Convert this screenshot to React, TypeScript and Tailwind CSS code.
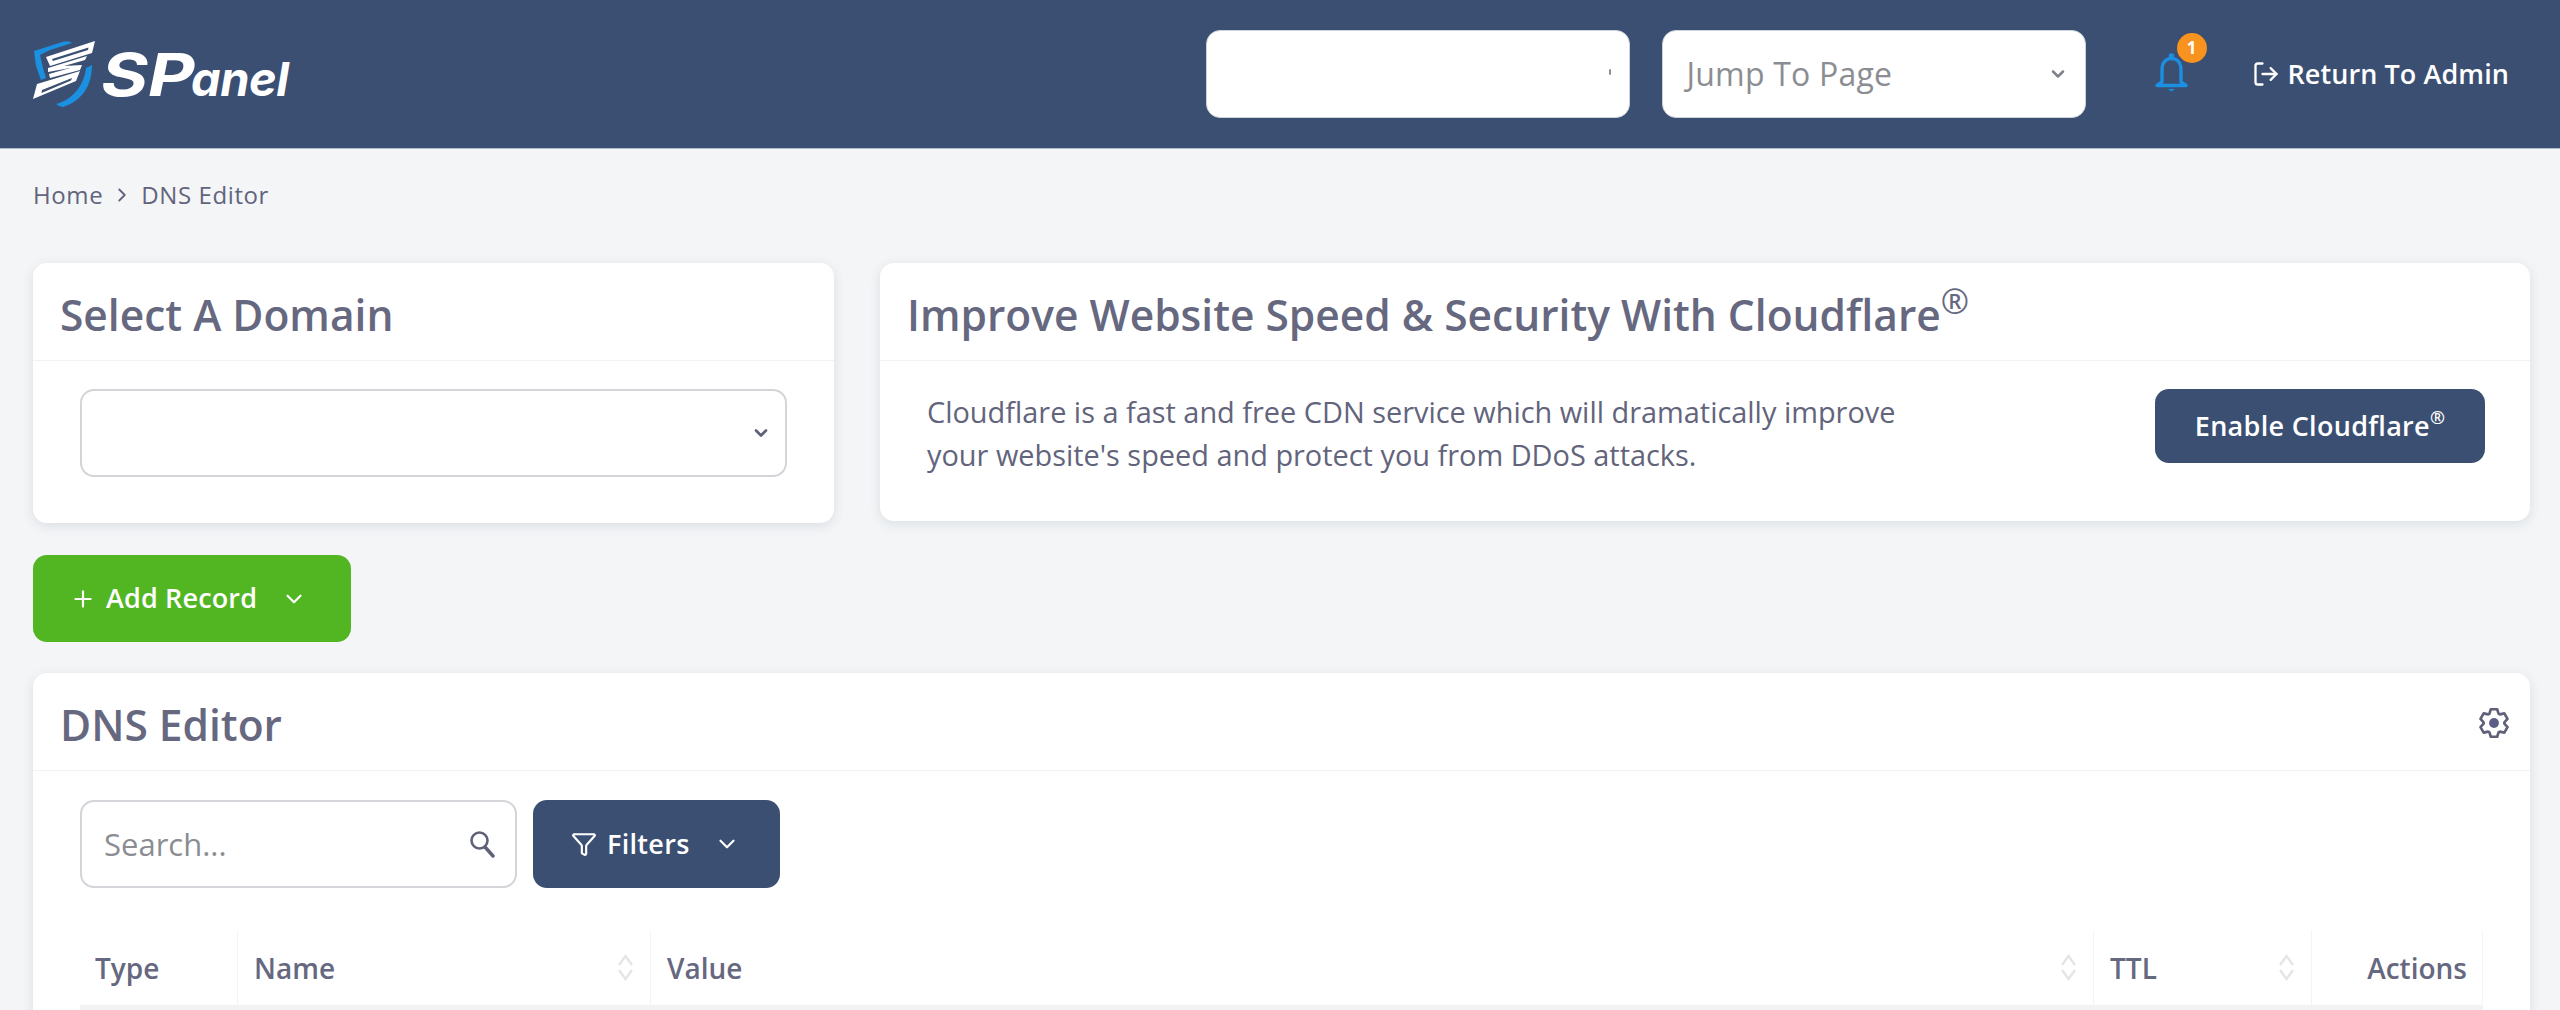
import React from "react";
import { ChevronDown, ChevronRight, Filter, LogOut, Plus } from "lucide-react";

function Shield() {
  return (
    <svg width="62" height="66" viewBox="13 13 62 66" className="shrink-0">
      <path d="M14 23 L44 13.5 Q49 12.5 52 15 L30 22 L20 27 L23 40 L26 50 L21 52 L16 38 Z" fill="#1b8fe0" />
      <path d="M72 37 C72 58 62 73 43 79 Q39 79 36 76 C52 72 64 58 66 40 Z" fill="#1b8fe0" />
      <path
        fillRule="evenodd"
        fill="#fff"
        d="M26 29 L75 13 L72 25 L30 38 Z M32 31 L33 33 L68 22 L68.5 19.5 Z"
      />
      <path fill="#fff" d="M28 40 L67 28 L65 32 L44 38 L62 37 L60 42 L30 50 L29 46 L50 40 L28 44 Z" />
      <path
        fillRule="evenodd"
        fill="#fff"
        d="M17 56 L60 43 L56 53 L13 71 Z M22 62 L21.5 65 L51 52.5 L52 50 Z"
      />
    </svg>
  );
}

function SortArrows() {
  return (
    <svg width="17" height="27" viewBox="0 0 17 27" fill="none" stroke="#e4e5e9" strokeWidth="2.4">
      <path d="M2 11 L8.5 2 L15 11" />
      <path d="M2 16 L8.5 25 L15 16" />
    </svg>
  );
}

const gearPath = (() => {
  const pts: string[] = [];
  for (let i = 0; i < 6; i++) {
    const a = (i * 60 - 90) * (Math.PI / 180);
    const at = (r: number, d: number) => {
      const t = a + (d * Math.PI) / 180;
      return `${(12 + r * Math.cos(t)).toFixed(2)} ${(12 + r * Math.sin(t)).toFixed(2)}`;
    };
    pts.push(at(7.8, -26), at(10.6, -13), at(10.6, 13), at(7.8, 26));
  }
  return `M${pts.join(" L")} Z`;
})();

function Gear() {
  return (
    <svg width="32" height="32" viewBox="0 0 24 24" fill="none" stroke="#5f6178" strokeWidth="2" strokeLinejoin="round">
      <path d={gearPath} />
      <circle cx="12" cy="12" r="3.7" fill="#5c5f85" stroke="none" />
    </svg>
  );
}

function BellIcon() {
  return (
    <svg width="33" height="39" viewBox="0 0 33 39" fill="none" stroke="#1b8fe0" strokeWidth="3.4" strokeLinecap="round">
      <circle cx="16.5" cy="3" r="2.8" fill="#1b8fe0" stroke="none" />
      <path d="M7 29 V17 C7 9.5 11 5.5 16.5 5.5 C22 5.5 26 9.5 26 17 V29 L31 32.5 H2 Z" strokeLinejoin="round" />
      <path d="M13 36 H20 L16.5 38.5 Z" fill="#1b8fe0" stroke="none" />
    </svg>
  );
}

function SearchIcon() {
  return (
    <svg width="26" height="28" viewBox="0 0 26 28" fill="none" stroke="#5f6178" strokeWidth="2.6" strokeLinecap="round">
      <circle cx="10.5" cy="10.5" r="8" />
      <path d="M16 17 L24 26" strokeWidth="3.4" />
    </svg>
  );
}

function Card({ title, className, children }: { title: React.ReactNode; className: string; children: React.ReactNode }) {
  return (
    <section className={`rounded-[14px] bg-white shadow-[0_3px_12px_rgba(60,70,90,0.12)] ${className}`}>
      <div className="flex h-[98px] items-center justify-between border-b border-[#f1f2f4] pl-[27px] pr-[20px]">{title}</div>
      {children}
    </section>
  );
}

const h2 = "pt-[8px] text-[42.5px] leading-none font-semibold text-[#66687f]";

export default function App() {
  return (
    <div className="h-[1010px] overflow-hidden bg-[#f3f5f7] font-['Open_Sans',sans-serif]">
      <header className="flex h-[149px] items-center border-b border-[#a9bdca] bg-[#3b4f73] pl-[33px] pr-[51px]">
        <div className="flex items-center gap-[6px]">
          <Shield />
          <span className="flex items-baseline font-['Inter',sans-serif] font-bold italic text-white">
            <span className="inline-block w-[90px] origin-left scale-x-[1.22] text-[59px] leading-none">SP</span>
            <span className="text-[47px] leading-none -tracking-[0.5px]">anel</span>
          </span>
        </div>
        <div className="ml-auto flex items-center gap-[32px]">
          <div className="flex h-[88px] w-[424px] items-center justify-end rounded-[14px] border border-[#ced4da] bg-white pr-[18px]">
            <span className="mb-[4px] h-[6px] w-[2px] rounded-sm bg-[#8a8f99]" />
          </div>
          <div className="flex h-[88px] w-[424px] items-center justify-between rounded-[14px] border border-[#ced4da] bg-white pl-[24px] pr-[17px] text-[32px] tracking-[0.2px] text-[#8b8d92]">
            Jump To Page
            <ChevronDown size={20} strokeWidth={3} className="text-[#7f828a]" />
          </div>
        </div>
        <div className="relative mb-[3px] ml-[69px]">
          <BellIcon />
          <span className="absolute -right-[19px] -top-[20px] flex h-[30px] w-[30px] items-center justify-center rounded-full bg-[#f7931e] text-[17px] font-bold text-white">1</span>
        </div>
        <div className="ml-[64px] flex items-center gap-[8px] text-[27px] font-semibold tracking-[0.08px] text-white">
          <LogOut size={28} strokeWidth={2} />
          Return To Admin
        </div>
      </header>

      <main className="pl-[33px] pr-[30px]">
        <nav className="flex h-[114px] items-center gap-[8px] pb-[22px] text-[24px] tracking-[0.6px] text-[#62647c]">
          Home
          <ChevronRight size={22} strokeWidth={2} />
          DNS Editor
        </nav>

        <div className="flex items-start gap-[46px]">
          <Card title={<h2 className={h2}>Select A Domain</h2>} className="h-[260px] w-[801px]">
            <div className="px-[47px] pt-[28px]">
              <div className="flex h-[88px] items-center justify-end rounded-[14px] border-2 border-[#d3d5d9] pr-[14px]">
                <ChevronDown size={20} strokeWidth={3.2} className="text-[#5f6178]" />
              </div>
            </div>
          </Card>
          <Card
            title={<h2 className={h2}>Improve Website Speed &amp; Security With Cloudflare<sup className="text-[34px] font-normal">®</sup></h2>}
            className="h-[258px] flex-1"
          >
            <div className="flex items-start justify-between pl-[47px] pr-[45px] pt-[28px]">
              <p className="pt-[1px] text-[28.9px] leading-[43px] text-[#62647c]">
                Cloudflare is a fast and free CDN service which will dramatically improve<br />
                your website's speed and protect you from DDoS attacks.
              </p>
              <button className="flex h-[74px] w-[330px] items-center justify-center rounded-[14px] bg-[#3b4f73] text-[27px] font-semibold tracking-[0.3px] text-white">
                Enable Cloudflare<sup className="text-[18px]">®</sup>
              </button>
            </div>
          </Card>
        </div>

        <button className="mt-[32px] flex h-[87px] w-[318px] items-center rounded-[14px] bg-[#52b623] pl-[37px] text-[27px] font-semibold tracking-[0.15px] text-white">
          <Plus size={26} strokeWidth={2} className="mr-[10px]" />
          Add Record
          <ChevronDown size={26} strokeWidth={2} className="ml-[24px]" />
        </button>

        <Card
          title={
            <>
              <h2 className={h2}>DNS Editor</h2>
              <span className="pt-[2px]"><Gear /></span>
            </>
          }
          className="mt-[31px] h-[400px]"
        >
          <div className="px-[47px] pt-[29px]">
            <div className="flex gap-[16px]">
              <div className="flex h-[88px] w-[437px] items-center justify-between rounded-[14px] border-2 border-[#d3d5d9] pl-[22px] pr-[20px]">
                <input placeholder="Search..." className="w-[300px] bg-transparent text-[31px] outline-none placeholder:text-[#8b8d92]" />
                <SearchIcon />
              </div>
              <button className="flex h-[88px] w-[247px] items-center rounded-[14px] bg-[#3b4f73] pl-[38px] text-[27px] font-semibold tracking-[0.3px] text-white">
                <Filter size={26} strokeWidth={2} className="mr-[10px]" />
                Filters
                <ChevronDown size={26} strokeWidth={2} className="ml-[24px]" />
              </button>
            </div>
            <div className="mt-[42px] flex h-[75px] w-[2403px] items-center text-[28px] font-semibold text-[#66687f]">
              <div className="flex h-full w-[158px] items-center border-r border-[#f3f4f6] pl-[15px]">Type</div>
              <div className="flex h-full w-[413px] items-center justify-between border-r border-[#f3f4f6] px-[16px]">Name<SortArrows /></div>
              <div className="flex h-full w-[1443px] items-center justify-between border-r border-[#f3f4f6] px-[16px]">Value<SortArrows /></div>
              <div className="flex h-full w-[218px] items-center justify-between border-r border-[#f3f4f6] px-[16px]">TTL<SortArrows /></div>
              <div className="flex h-full flex-1 items-center justify-end border-r border-[#f3f4f6] pr-[15px]">Actions</div>
            </div>
            <div className="h-[8px] w-[2403px] bg-[#f1f2f4]" />
          </div>
        </Card>
      </main>
    </div>
  );
}
